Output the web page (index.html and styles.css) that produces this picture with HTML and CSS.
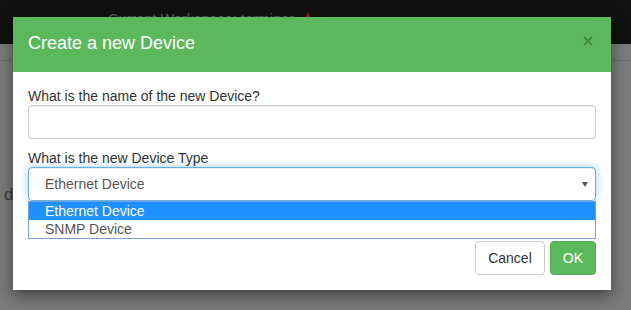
FILE: index.html
```html
<!DOCTYPE html>
<html lang="en">
<head>
  <meta charset="UTF-8">
  <title>Create a new Device</title>
  <link rel="stylesheet" href="styles.css">
</head>
<body>
  <div class="navbar">
    <span class="workspace">Current Workspace: terminor</span>
    <svg class="alert-icon" width="10" height="10" viewBox="0 0 10 10">
      <path d="M5 0 L10 10 L0 10 Z" fill="#8e1f1f"/>
    </svg>
  </div>
  <div class="page">
    <div class="page-rule"></div>
    <div class="page-text">d</div>
  </div>

  <div class="modal">
    <div class="modal-header">
      <h4 class="modal-title">Create a new Device</h4>
      <svg class="close" width="10" height="10" viewBox="0 0 10 10">
        <path d="M1 1 L9 9 M9 1 L1 9" stroke="#3e8b3e" stroke-width="2"/>
      </svg>
    </div>
    <div class="modal-body">
      <div class="form-group">
        <label for="deviceName">What is the name of the new Device?</label>
        <input type="text" id="deviceName" class="form-control">
      </div>
      <div class="form-group last">
        <label for="deviceType">What is the new Device Type</label>
        <div class="select focused">
          <span>Ethernet Device</span>
          <span class="caret"></span>
        </div>
        <ul class="select-popup">
          <li class="selected">Ethernet Device</li>
          <li>SNMP Device</li>
        </ul>
      </div>
    </div>
    <div class="modal-footer">
      <button class="btn btn-default">Cancel</button>
      <button class="btn btn-success">OK</button>
    </div>
  </div>
</body>
</html>
```

FILE: styles.css
```css
* {
  box-sizing: border-box;
}

body {
  margin: 0;
  background: #7b7b7b;
  font-family: 'Liberation Sans', Arial, sans-serif;
  font-size: 14px;
  color: #333;
  height: 310px;
  overflow: hidden;
}

.navbar {
  height: 44px;
  background: #111;
  padding: 11px 0 0 108px;
  display: flex;
  align-items: flex-start;
  gap: 9px;
}

.workspace {
  color: #666;
  font-size: 14.5px;
  line-height: 16px;
}

.alert-icon {
  margin-top: 1px;
}

.page {
  padding-top: 16px;
}

.page-rule {
  height: 1px;
  background: #6c6c6c;
}

.page-text {
  margin-top: 124px;
  padding-left: 4px;
  font-size: 17px;
  color: #3d3d3d;
}

.modal {
  position: absolute;
  left: 13px;
  top: 17px;
  width: 598px;
  background: #fff;
  box-shadow: 0 5px 15px rgba(0, 0, 0, 0.5);
}

.modal-header {
  background: #5cb85c;
  height: 55px;
  padding: 14px 15px 0;
  display: flex;
  justify-content: space-between;
  align-items: flex-start;
}

.modal-title {
  margin: 0;
  font-size: 18px;
  font-weight: normal;
  line-height: 25px;
  color: #fff;
}

.close {
  margin: 5px 3px 0 0;
}

.modal-body {
  padding: 15px 15px 15px;
  position: relative;
}

.form-group {
  margin-bottom: 10px;
}

.form-group.last {
  margin-bottom: 9px;
}

label {
  display: block;
  line-height: 18px;
  margin: 0;
}

.form-control {
  display: block;
  width: 100%;
  height: 34px;
  margin: 0;
  padding: 6px 12px;
  border: 1px solid #ccc;
  border-radius: 4px;
  box-shadow: inset 0 1px 1px rgba(0, 0, 0, 0.075);
  font: inherit;
}

.select {
  height: 34px;
  border: 1px solid #66afe9;
  border-radius: 4px;
  padding: 0 7px 0 16px;
  display: flex;
  align-items: center;
  justify-content: space-between;
  color: #555;
  box-shadow: inset 0 1px 1px rgba(0, 0, 0, 0.075), 0 0 8px rgba(102, 175, 233, 0.6);
}

.caret {
  width: 0;
  height: 0;
  border-left: 3px solid transparent;
  border-right: 3px solid transparent;
  border-top: 5px solid #555;
}

.select-popup {
  position: absolute;
  left: 15px;
  right: 15px;
  top: 129px;
  margin: 0;
  padding: 0;
  list-style: none;
  background: #fff;
  border: 1px solid #7a9ed6;
  z-index: 2;
}

.select-popup li {
  height: 18px;
  line-height: 18px;
  padding-left: 16px;
  color: #555;
  font-size: 14px;
}

.select-popup li.selected {
  background: #1e90ff;
  color: #fff;
}

.modal-footer {
  border-top: 1px solid #fff;
  padding: 15px;
  display: flex;
  justify-content: flex-end;
  gap: 5px;
}

.btn {
  height: 34px;
  padding: 6px 12px;
  font: inherit;
  font-size: 14px;
  border-radius: 4px;
  border: 1px solid #ccc;
  background: #fff;
  color: #333;
}

.btn-success {
  background: #5cb85c;
  border-color: #4cae4c;
  color: #fff;
}
```
